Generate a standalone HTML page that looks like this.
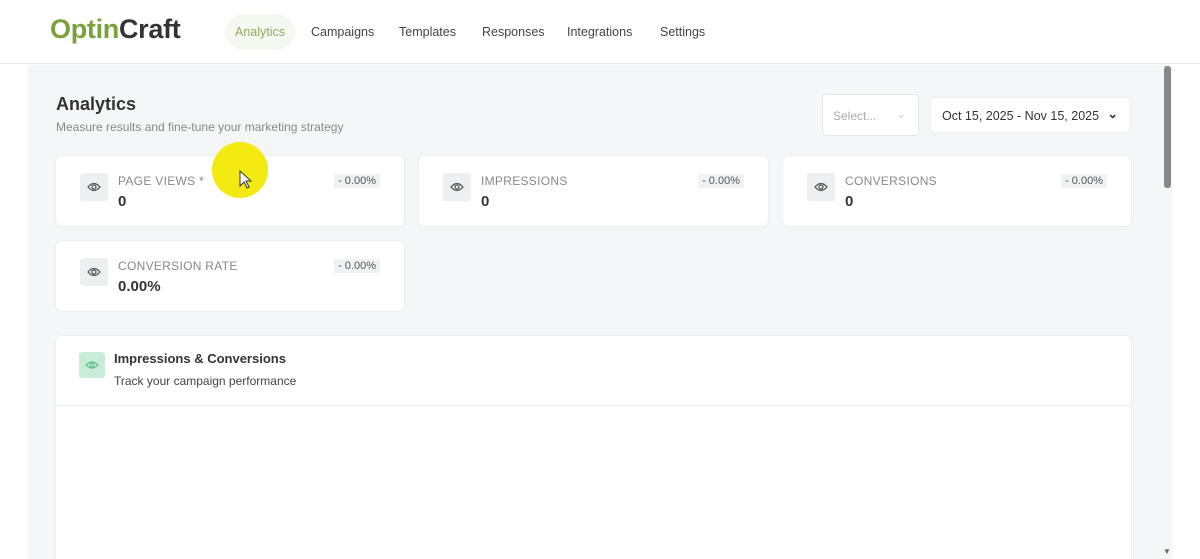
<!DOCTYPE html>
<html><head><style>
*{box-sizing:border-box;margin:0;padding:0}
html,body{width:1200px;height:559px;overflow:hidden}
body{background:#fff;font-family:"Liberation Sans",sans-serif;color:#333;position:relative}
.hdr{position:absolute;left:0;top:0;width:1200px;height:64px;background:#fff;border-bottom:1px solid #e8e9ec}
.logo{position:absolute;left:50px;top:14px;font-size:27px;font-weight:bold;letter-spacing:-0.3px}
.nav{position:absolute;top:25px;font-size:12.5px;color:#444}
.main{position:absolute;left:28px;top:65px;width:1132px;height:494px;background:#f5f6f8}
.sb{position:absolute;left:1160px;top:65px;width:12px;height:494px;background:#f5f6f8}
.thumb{position:absolute;left:1164px;top:66px;width:7px;height:122px;background:#888;border-radius:3px}
.card{position:absolute;background:#fff;border:1px solid #eceef1;border-radius:6px}
.ic{position:absolute;left:24px;top:17px;width:28px;height:28px;background:#eeeff1;border-radius:3px}
.lbl{position:absolute;left:62px;top:18px;font-size:12px;color:#888;letter-spacing:.3px}
.val{position:absolute;left:62px;top:37px;font-size:15px;font-weight:bold;color:#333}
.pct{position:absolute;right:24px;top:18px;font-size:11px;color:#555;background:#f0f1f3;padding:1px 4px}
</style></head><body>
<div class="hdr">
<div class="logo"><span style="color:#7aa23a">Optin</span><span style="color:#333">Craft</span></div>
<div style="position:absolute;left:225px;top:14px;width:70px;height:36px;border-radius:18px;background:#f6f8f2"></div>
<div class="nav" style="left:235px;color:#8fae5a">Analytics</div>
<div class="nav" style="left:311px">Campaigns</div>
<div class="nav" style="left:399px">Templates</div>
<div class="nav" style="left:482px">Responses</div>
<div class="nav" style="left:567px">Integrations</div>
<div class="nav" style="left:660px">Settings</div>
</div>
<div class="main"></div>
<div class="sb"></div><div class="thumb"></div>
<div style="position:absolute;left:56px;top:94px;font-size:18px;font-weight:bold;color:#333">Analytics</div>
<div style="position:absolute;left:56px;top:120px;font-size:12px;color:#888">Measure results and fine-tune your marketing strategy</div>
<div style="position:absolute;left:822px;top:94px;width:97px;height:42px;background:#fff;border:1px solid #e2e4e8;border-radius:4px;font-size:12px;color:#aaa;padding:14px 0 0 10px">Select...<span style="position:absolute;right:12px;top:12px;color:#ccc">&#8964;</span></div>
<div style="position:absolute;left:930px;top:97px;width:201px;height:36px;background:#fff;border:1px solid #eceef1;border-radius:4px;font-size:12.5px;color:#333;padding:11px 0 0 11px">Oct 15, 2025 - Nov 15, 2025<span style="position:absolute;right:12px;top:8px;font-weight:bold">&#8964;</span></div>

<div class="card" style="left:55px;top:155px;width:350px;height:72px"><div class="ic"><svg width="28" height="28"><path d="M8 14q6-7 12 0q-6 7-12 0z" fill="none" stroke="#555" stroke-width="1.3"/><circle cx="14" cy="14" r="2" fill="none" stroke="#555" stroke-width="1.3"/></svg></div><div class="lbl">PAGE VIEWS *</div><div class="val">0</div><div class="pct">- 0.00%</div></div>
<div class="card" style="left:418px;top:155px;width:351px;height:72px"><div class="ic"><svg width="28" height="28"><path d="M8 14q6-7 12 0q-6 7-12 0z" fill="none" stroke="#555" stroke-width="1.3"/><circle cx="14" cy="14" r="2" fill="none" stroke="#555" stroke-width="1.3"/></svg></div><div class="lbl">IMPRESSIONS</div><div class="val">0</div><div class="pct">- 0.00%</div></div>
<div class="card" style="left:782px;top:155px;width:350px;height:72px"><div class="ic"><svg width="28" height="28"><path d="M8 14q6-7 12 0q-6 7-12 0z" fill="none" stroke="#555" stroke-width="1.3"/><circle cx="14" cy="14" r="2" fill="none" stroke="#555" stroke-width="1.3"/></svg></div><div class="lbl">CONVERSIONS</div><div class="val">0</div><div class="pct">- 0.00%</div></div>
<div class="card" style="left:55px;top:240px;width:350px;height:72px"><div class="ic"><svg width="28" height="28"><path d="M8 14q6-7 12 0q-6 7-12 0z" fill="none" stroke="#555" stroke-width="1.3"/><circle cx="14" cy="14" r="2" fill="none" stroke="#555" stroke-width="1.3"/></svg></div><div class="lbl">CONVERSION RATE</div><div class="val">0.00%</div><div class="pct">- 0.00%</div></div>

<div style="position:absolute;left:212px;top:142px;width:56px;height:56px;border-radius:50%;background:#f2ea10"></div>
<svg style="position:absolute;left:239px;top:170px" width="14" height="20"><path d="M1 1v15l4-4 3 6 2-1-3-6h5z" fill="#fff" stroke="#333" stroke-width="1"/></svg>

<div class="card" style="left:55px;top:335px;width:1077px;height:224px;border-radius:6px 6px 0 0;border-bottom:none">
<div style="position:absolute;left:23px;top:16px;width:26px;height:26px;background:#c8ecd8;border-radius:3px"><svg width="26" height="26"><path d="M7 13q6-6 12 0q-6 6-12 0z" fill="none" stroke="#5cbf8a" stroke-width="1.2"/><circle cx="13" cy="13" r="1.8" fill="none" stroke="#5cbf8a" stroke-width="1.2"/></svg></div>
<div style="position:absolute;left:58px;top:15px;font-size:13px;font-weight:bold;color:#333">Impressions &amp; Conversions</div>
<div style="position:absolute;left:58px;top:38px;font-size:12px;color:#444">Track your campaign performance</div>
<div style="position:absolute;left:0;top:69px;width:100%;border-top:1px solid #eceef1"></div>
</div>
<div style="position:absolute;left:1163px;top:547px;font-size:8px;color:#666">&#9660;</div>
</body></html>
